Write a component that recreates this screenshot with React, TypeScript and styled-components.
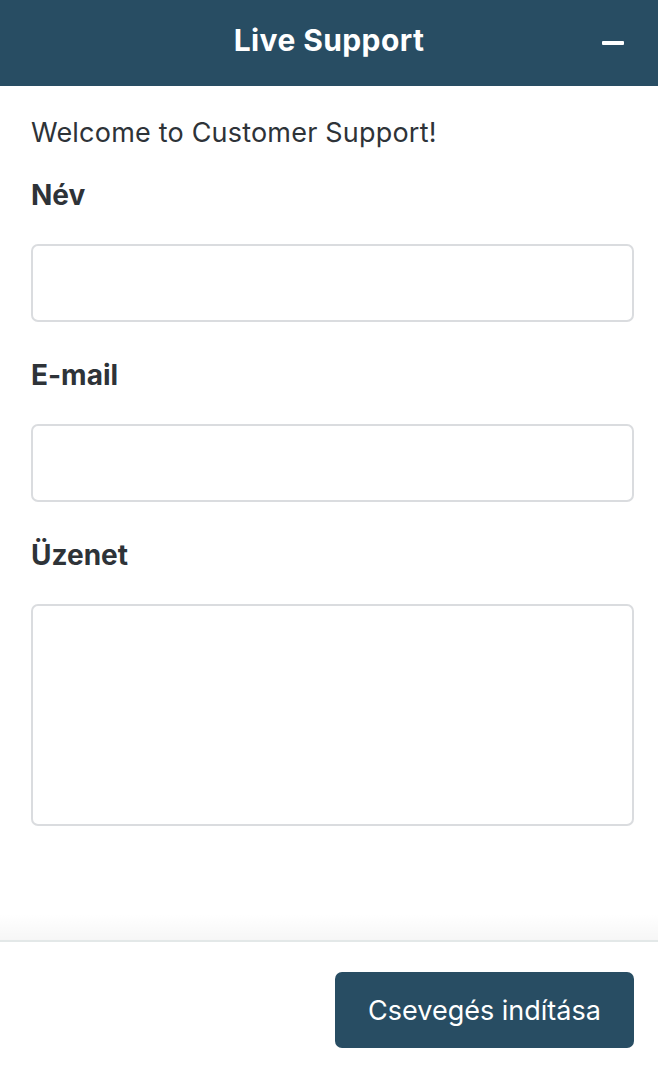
import styled, { createGlobalStyle } from "styled-components";

const GlobalStyle = createGlobalStyle`
  html, body {
    margin: 0;
    padding: 0;
    background: #fff;
  }
  body {
    font-family: Inter, "Liberation Sans", Arial, sans-serif;
    -webkit-font-smoothing: antialiased;
  }
`;

const Widget = styled.div`
  width: 658px;
  height: 1072px;
  display: flex;
  flex-direction: column;
  background: #fff;
`;

const Header = styled.header`
  height: 86px;
  flex-shrink: 0;
  background: #284d63;
  display: grid;
  grid-template-columns: 1fr auto 1fr;
  align-items: center;
  padding: 0 33px;
  box-sizing: border-box;
`;

const Title = styled.h1`
  grid-column: 2;
  margin: 0 0 6px;
  font-size: 30px;
  line-height: 40px;
  font-weight: 700;
  color: #fff;
  letter-spacing: 0.4px;
`;

const MinimizeButton = styled.button`
  justify-self: end;
  width: 24px;
  height: 24px;
  padding: 0;
  border: none;
  background: transparent;
  display: flex;
  align-items: center;
  justify-content: center;
  cursor: pointer;

  &::before {
    content: "";
    display: block;
    width: 22px;
    height: 4px;
    border-radius: 1px;
    background: #fff;
  }
`;

const Body = styled.main`
  flex: 1;
  padding: 27px 24px 0 31px;
  display: flex;
  flex-direction: column;
`;

const Welcome = styled.p`
  margin: 0 0 22px;
  font-size: 27px;
  line-height: 40px;
  letter-spacing: 0.2px;
  color: #2e3338;
`;

const Field = styled.div`
  display: flex;
  flex-direction: column;
  gap: 29px;
  margin-bottom: 33px;
`;

const Label = styled.label`
  font-size: 28px;
  line-height: 40px;
  font-weight: 700;
  color: #2e3338;
`;

const Input = styled.input`
  box-sizing: border-box;
  width: 603px;
  height: 78px;
  border: 2px solid #dadcdf;
  border-radius: 7px;
  outline: none;
  font: inherit;
  font-size: 27px;
  padding: 0 16px;
`;

const TextArea = styled.textarea`
  box-sizing: border-box;
  width: 603px;
  height: 222px;
  border: 2px solid #dadcdf;
  border-radius: 7px;
  outline: none;
  resize: none;
  font: inherit;
  font-size: 27px;
  padding: 16px;
`;

const Footer = styled.footer`
  position: relative;
  height: 132px;
  flex-shrink: 0;
  border-top: 2px solid #e3e8e8;
  display: flex;
  justify-content: flex-end;
  align-items: flex-start;
  padding: 30px 24px 0 0;
  box-sizing: border-box;

  &::before {
    content: "";
    position: absolute;
    left: 0;
    right: 0;
    top: -28px;
    height: 26px;
    background: linear-gradient(to bottom, rgba(0, 0, 0, 0), rgba(0, 0, 0, 0.035));
  }
`;

const StartButton = styled.button`
  width: 299px;
  height: 76px;
  border: none;
  border-radius: 7px;
  background: #284d63;
  color: #fff;
  font: inherit;
  font-size: 27px;
  cursor: pointer;
`;

export default function App() {
  return (
    <>
      <GlobalStyle />
      <Widget>
        <Header>
          <Title>Live Support</Title>
          <MinimizeButton aria-label="Minimize" />
        </Header>
        <Body>
          <Welcome>Welcome to Customer Support!</Welcome>
          <Field>
            <Label>Név</Label>
            <Input type="text" />
          </Field>
          <Field>
            <Label>E-mail</Label>
            <Input type="email" />
          </Field>
          <Field>
            <Label>Üzenet</Label>
            <TextArea />
          </Field>
        </Body>
        <Footer>
          <StartButton>Csevegés indítása</StartButton>
        </Footer>
      </Widget>
    </>
  );
}
